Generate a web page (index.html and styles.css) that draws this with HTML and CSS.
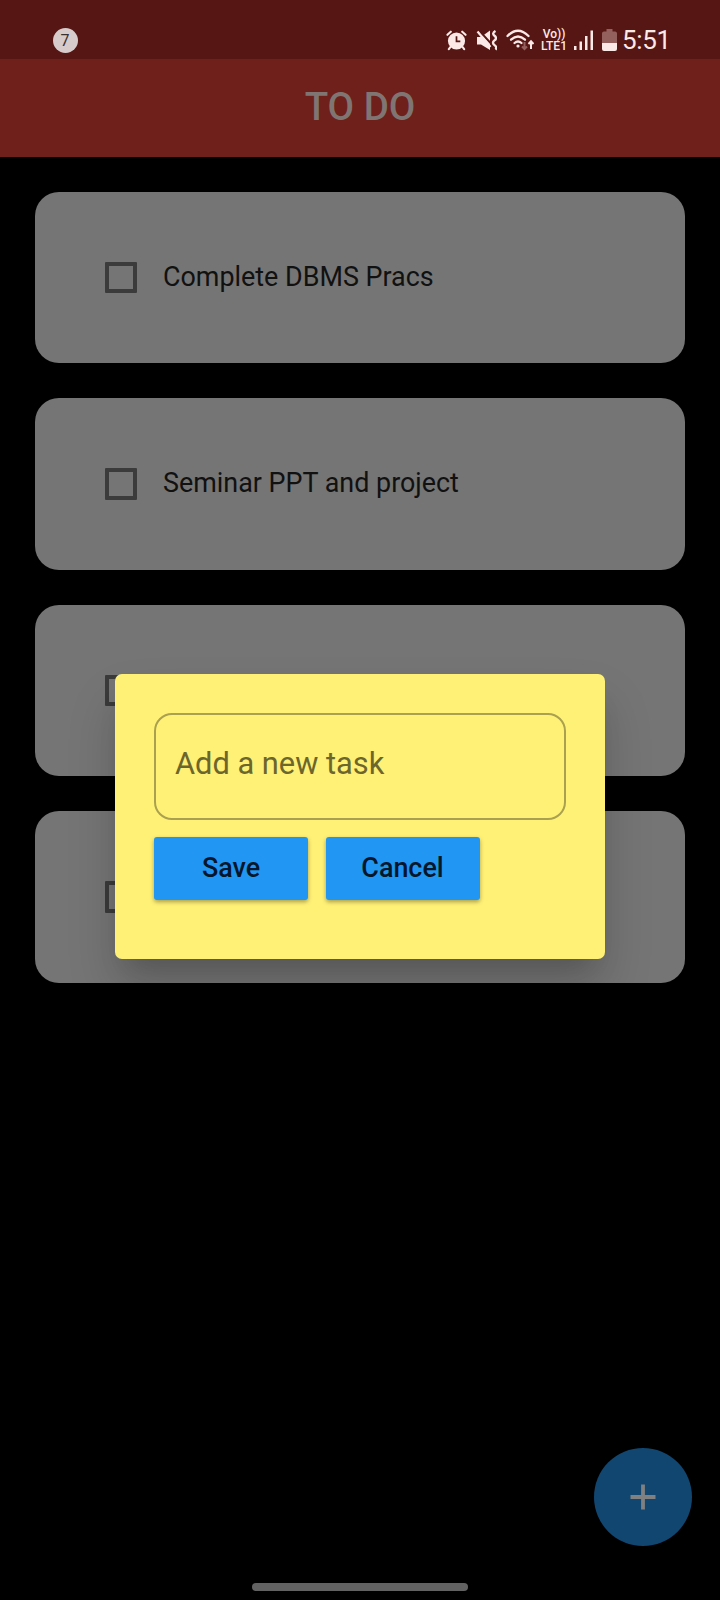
FILE: index.html
```html
<!DOCTYPE html>
<html lang="en">
<head>
<meta charset="utf-8">
<title>TO DO</title>
<link rel="stylesheet" href="styles.css">
</head>
<body>
<div class="screen">
  <header class="status">
    <span class="badge">7</span>
    <div class="tray">
      <svg class="ic-alarm" width="21" height="21" viewBox="0 0 22 22"><circle cx="11" cy="11.5" r="9" fill="#fbe9e7"/><path d="M1.500 5 5 1.800M20.500 5 17 1.800M4.500 18 3 20M17.500 18 19 20" stroke="#fbe9e7" stroke-width="2.200" stroke-linecap="round"/><path d="M11 6.500v5.500h4" fill="none" stroke="#561614" stroke-width="1.800"/></svg>
      <svg class="ic-mute" width="21" height="21" viewBox="0 0 21 21"><path d="M1 7h4l9-6.500v19.500L5 14.500H1z" fill="#fbe9e7"/><path d="M3 0.500 15.500 14" stroke="#561614" stroke-width="2"/><path d="M1.500 1.500 14.500 17" stroke="#fbe9e7" stroke-width="2.200"/><path d="M19.500 1q-4 2.400-1 4.700t0 4.700t0 4.700t1 4.500" fill="none" stroke="#fbe9e7" stroke-width="2.400"/></svg>
      <svg class="ic-wifi" width="28" height="22" viewBox="0 0 28 22"><g fill="none" stroke="#fbe9e7" stroke-width="2.300" stroke-linecap="round"><path d="M1.500 7Q12 -3.500 22.500 7"/><path d="M5 10.700q7-6.500 14 0"/><path d="M8.500 14q3.500-3 7 0"/></g><circle cx="12" cy="17" r="1.600" fill="#fbe9e7"/><path d="M18.500 13v7M16 17.500l2.500 2.500 2.500-2.500" fill="none" stroke="#94605d" stroke-width="2"/><path d="M25 20v-7.500M22.500 15l2.500-2.800 2.500 2.800" fill="none" stroke="#fbe9e7" stroke-width="2"/></svg>
      <span class="lte"><span>Vo))</span><span>LTE1</span></span>
      <svg class="ic-signal" width="19" height="20" viewBox="0 0 19 20"><path d="M0 16h2.500v4H0zM5.500 11.500H8V20H5.500zM11 6h2.500v14H11zM16.500 0.500H19V20h-2.500z" fill="#fbe9e7"/></svg>
      <svg class="ic-battery" width="15" height="22" viewBox="0 0 15 22"><path d="M4.500 0h6v2.500H13a2 2 0 0 1 2 2V14H0V4.500a2 2 0 0 1 2-2h2.500z" fill="#94605d"/><path d="M0 14h15v6a2 2 0 0 1-2 2H2a2 2 0 0 1-2-2z" fill="#fbe9e7"/></svg>
      <span class="clock">5:51</span>
    </div>
  </header>
  <h1 class="appbar">TO DO</h1>
  <main class="list">
    <div class="card"><span class="check"></span><span class="task">Complete DBMS Pracs</span></div>
    <div class="card"><span class="check"></span><span class="task">Seminar PPT and project</span></div>
    <div class="card"><span class="check"></span></div>
    <div class="card"><span class="check"></span></div>
  </main>
  <div class="fab"><svg width="26" height="26" viewBox="0 0 26 26"><path d="M13 .5v25M.5 13h25" stroke="#808080" stroke-width="3.800"/></svg></div>
  <div class="home"></div>
  <section class="dialog">
    <div class="field">Add a new task</div>
    <div class="actions"><span class="btn">Save</span><span class="btn">Cancel</span></div>
  </section>
</div>
</body>
</html>
```
FILE: styles.css
```css
body { margin: 0; background: #000; font-family: Roboto, sans-serif; }
.screen { position: relative; width: 720px; height: 1600px; overflow: hidden; background: #000; }
.status { height: 59px; box-sizing: border-box; padding: 21px 50px 0 52.5px; background: #561614; display: flex; justify-content: space-between; align-items: flex-start; color: #fbe9e7; }
.badge { width: 25px; height: 25px; margin-top: 7px; border-radius: 50%; background: #d8cbcb; color: #3a3030; font-size: 16px; line-height: 25px; text-align: center; }
.tray { display: flex; align-items: center; height: 38px; }
.ic-mute { margin-left: 9px; }
.ic-wifi { margin-left: 9px; }
.lte { display: flex; flex-direction: column; align-items: center; margin-left: 6px; width: 28px; font-size: 12px; line-height: 12px; font-weight: 500; }
.ic-signal { margin-left: 6px; }
.ic-battery { margin-left: 9px; }
.clock { width: 48px; margin-left: 5px; font-size: 26px; line-height: 38px; letter-spacing: -.3px; }
.appbar { margin: 0; height: 97.500px; line-height: 96px; background: #6f201a; color: #7f7573; text-align: center; font-size: 38.5px; font-weight: 500; }
.list { display: flex; flex-direction: column; gap: 35px; padding: 35px; }
.card { height: 171.5px; box-sizing: border-box; padding-left: 70px; border-radius: 24px; background: #757575; display: flex; align-items: center; }
.check { width: 31.5px; height: 31.5px; box-sizing: border-box; border: 4px solid #3b3b3b; border-radius: 1px; }
.task { margin: -1px 0 0 26.5px; font-size: 26.9px; color: #111; }
.fab { position: absolute; right: 28px; bottom: 54px; width: 98px; height: 98px; border-radius: 50%; background: #114670; display: flex; align-items: center; justify-content: center; }
.home { position: absolute; left: 252px; bottom: 9px; width: 216px; height: 8px; border-radius: 4px; background: #626262; }
.dialog { position: absolute; left: 115px; top: 674px; width: 490px; height: 285px; box-sizing: border-box; padding: 39px; border-radius: 7px; background: #fff176; box-shadow: 0 19px 26px -12px rgba(0,0,0,.15), 0 30px 50px 0 rgba(0,0,0,.16); }
.field { height: 107px; box-sizing: border-box; border: 2px solid #aaa04f; border-radius: 18px; padding-left: 19px; line-height: 98px; font-size: 30.8px; color: #6c662d; }
.actions { display: flex; gap: 17.5px; margin-top: 17px; }
.btn { width: 154px; height: 63px; line-height: 63px; text-align: center; border-radius: 3px; background: #2196f3; color: #03162b; font-size: 26.9px; font-weight: 500; box-shadow: 0 2px 4px rgba(0,0,0,.35); }
```
